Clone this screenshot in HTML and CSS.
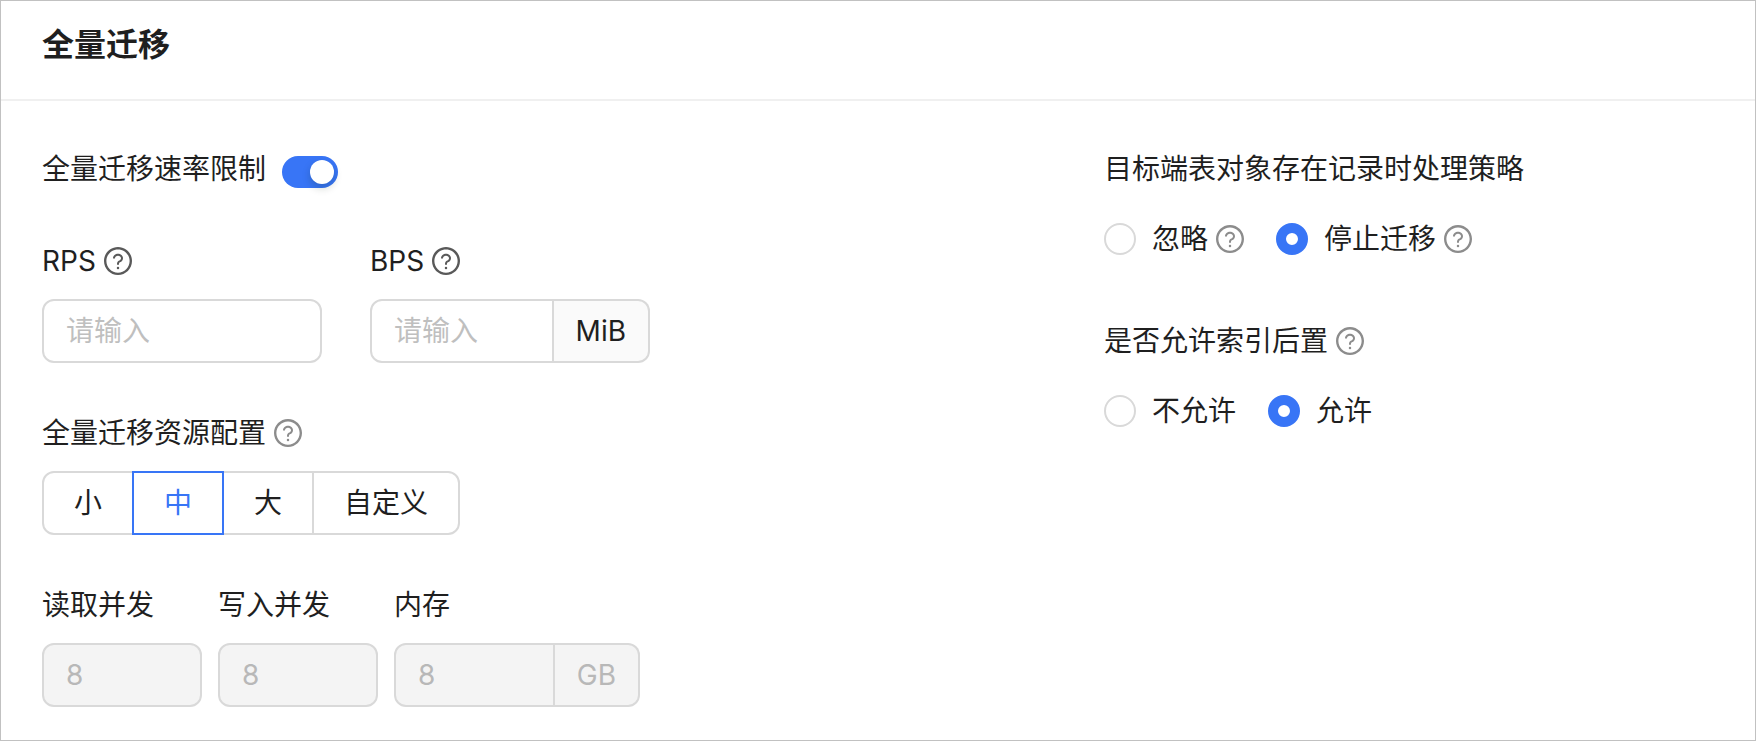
FILE: index.html
```html
<!DOCTYPE html>
<html lang="zh-CN">
<head>
<meta charset="utf-8">
<meta name="viewport" content="width=device-width, initial-scale=1">
<title>全量迁移</title>
<link rel="stylesheet" href="styles.css">
</head>
<body>
<svg class="sprite" aria-hidden="true">
  <symbol id="question" viewBox="64 64 896 896">
    <path d="M512 64C264.6 64 64 264.6 64 512s200.6 448 448 448 448-200.6 448-448S759.4 64 512 64zm0 820c-205.4 0-372-166.6-372-372s166.6-372 372-372 372 166.6 372 372-166.6 372-372 372z"/>
    <path d="M623.6 316.7C593.6 290.4 554 276 512 276s-81.6 14.5-111.6 40.7C369.2 344 352 380.7 352 420v7.6c0 4.4 3.6 8 8 8h48c4.4 0 8-3.6 8-8V420c0-44.1 43.1-80 96-80s96 35.9 96 80c0 31.1-22 59.6-56.1 72.7-21.2 8.1-39.2 22.3-52.1 40.9-13.1 19-19.9 41.8-19.9 64.9V620c0 4.4 3.6 8 8 8h48c4.4 0 8-3.6 8-8v-22.7a48.3 48.3 0 0130.9-44.8c59-22.7 97.1-74.7 97.1-132.5.1-39.3-17.1-76-48.3-103.3zM472 732a40 40 0 1080 0 40 40 0 10-80 0z"/>
  </symbol>
</svg>
<main class="panel">
  <header class="panel-header">
    <h1 class="panel-title">全量迁移</h1>
  </header>
  <form class="panel-body">
    <div class="column">
      <div class="switch-row">
        <label for="limit">全量迁移速率限制</label>
        <input class="switch" id="limit" type="checkbox" role="switch" checked>
      </div>
      <div class="fields rate-fields">
        <div class="field field-wide">
          <div class="label-row">
            <label for="rps">RPS</label>
            <svg class="help help-dark" aria-hidden="true"><use href="#question"/></svg>
          </div>
          <input class="input" id="rps" type="text" placeholder="请输入">
        </div>
        <div class="field field-wide">
          <div class="label-row">
            <label for="bps">BPS</label>
            <svg class="help help-dark" aria-hidden="true"><use href="#question"/></svg>
          </div>
          <div class="input-group">
            <input class="input" id="bps" type="text" placeholder="请输入">
            <span class="addon">MiB</span>
          </div>
        </div>
      </div>
      <div class="field resource-field">
        <div class="label-row">
          <span id="resource">全量迁移资源配置</span>
          <svg class="help" aria-hidden="true"><use href="#question"/></svg>
        </div>
        <div class="segmented" role="group" aria-labelledby="resource">
          <button class="segment" type="button" aria-pressed="false">小</button>
          <button class="segment segment-active" type="button" aria-pressed="true">中</button>
          <button class="segment" type="button" aria-pressed="false">大</button>
          <button class="segment" type="button" aria-pressed="false">自定义</button>
        </div>
      </div>
      <div class="fields">
        <div class="field field-small">
          <label class="label-row" for="read">读取并发</label>
          <input class="input" id="read" type="text" value="8" disabled>
        </div>
        <div class="field field-small">
          <label class="label-row" for="write">写入并发</label>
          <input class="input" id="write" type="text" value="8" disabled>
        </div>
        <div class="field field-memory">
          <label class="label-row" for="memory">内存</label>
          <div class="input-group">
            <input class="input" id="memory" type="text" value="8" disabled>
            <span class="addon addon-disabled">GB</span>
          </div>
        </div>
      </div>
    </div>
    <div class="column">
      <div class="choice" role="radiogroup" aria-labelledby="strategy">
        <div class="label-row"><span id="strategy">目标端表对象存在记录时处理策略</span></div>
        <div class="options">
          <div class="option">
            <input class="radio" id="ignore" type="radio" name="strategy">
            <label class="option-label" for="ignore">忽略<svg class="help" aria-hidden="true"><use href="#question"/></svg></label>
          </div>
          <div class="option">
            <input class="radio" id="stop" type="radio" name="strategy" checked>
            <label class="option-label" for="stop">停止迁移<svg class="help" aria-hidden="true"><use href="#question"/></svg></label>
          </div>
        </div>
      </div>
      <div class="choice" role="radiogroup" aria-labelledby="postpone">
        <div class="label-row">
          <span id="postpone">是否允许索引后置</span>
          <svg class="help" aria-hidden="true"><use href="#question"/></svg>
        </div>
        <div class="options">
          <div class="option">
            <input class="radio" id="deny" type="radio" name="postpone">
            <label class="option-label" for="deny">不允许</label>
          </div>
          <div class="option">
            <input class="radio" id="allow" type="radio" name="postpone" checked>
            <label class="option-label" for="allow">允许</label>
          </div>
        </div>
      </div>
    </div>
  </form>
</main>
</body>
</html>
```
FILE: styles.css
```css
:root {
  --primary: #3875f6;
  --border: #d9d9d9;
  --text: #1f1f1f;
  --muted: #bfbfbf;
}

* {
  box-sizing: border-box;
}

body {
  margin: 0;
  color: var(--text);
  background: #fff;
  font: 28px/44px Inter, "Noto Sans CJK SC", sans-serif;
}

input,
button {
  margin: 0;
  font: inherit;
  color: inherit;
}

.sprite {
  display: none;
}

.panel {
  min-height: 100vh;
  border: 1px solid #c1c1c1;
}

.panel-header {
  padding: 20px 41px 30px;
  border-bottom: 2px solid #f0f0f0;
}

.panel-title {
  margin: 0;
  font-size: 32px;
  font-weight: 600;
  line-height: 48px;
}

.panel-body {
  display: grid;
  grid-template-columns: minmax(0, 1062fr) minmax(0, 610fr);
  padding: 46px 41px 32px;
}

.switch-row {
  display: flex;
  align-items: center;
  gap: 16px;
  height: 50px;
  margin-bottom: 42px;
}

.switch-row label {
  align-self: flex-start;
}

.switch {
  appearance: none;
  display: flex;
  justify-content: flex-end;
  width: 56px;
  height: 32px;
  padding: 4px;
  border-radius: 16px;
  background: var(--primary);
}

.switch::before {
  content: "";
  width: 24px;
  height: 24px;
  border-radius: 50%;
  background: #fff;
  box-shadow: 0 4px 8px rgba(0, 35, 11, 0.2);
}

.fields {
  display: flex;
  gap: 16px;
}

.rate-fields {
  gap: 48px;
}

.rate-fields,
.resource-field {
  margin-bottom: 48px;
}

.field {
  display: flex;
  flex-direction: column;
  gap: 16px;
}

.field-wide {
  width: 280px;
}

.field-small {
  width: 160px;
}

.field-memory {
  width: 246px;
}

.label-row,
.option-label {
  display: flex;
  align-items: center;
  gap: 8px;
  height: 44px;
}

.help {
  flex: none;
  width: 28px;
  height: 28px;
  fill: #8c8c8c;
}

.help-dark {
  fill: #595959;
}

.input {
  width: 100%;
  min-width: 0;
  height: 64px;
  padding: 0 22px;
  border: 2px solid var(--border);
  border-radius: 12px;
  background: #fff;
}

.input::placeholder {
  color: var(--muted);
  opacity: 1;
}

.input:disabled {
  color: #b8b8b8;
  background: #f4f4f4;
}

.input-group {
  display: flex;
}

.input-group .input {
  flex: 1;
  border-radius: 12px 0 0 12px;
}

.addon {
  padding: 8px 22px;
  border: 2px solid var(--border);
  border-left: 0;
  border-radius: 0 12px 12px 0;
  background: #fafafa;
}

.addon-disabled {
  color: #b8b8b8;
  background: #f4f4f4;
}

.segmented {
  display: flex;
}

.segment {
  height: 64px;
  padding: 0 30px;
  border: 2px solid var(--border);
  background: #fff;
}

.segment + .segment {
  margin-left: -2px;
}

.segment:first-child {
  border-radius: 12px 0 0 12px;
}

.segment:last-child {
  border-radius: 0 12px 12px 0;
}

.segment-active {
  z-index: 1;
  color: var(--primary);
  border-color: var(--primary);
}

.choice {
  display: flex;
  flex-direction: column;
  gap: 26px;
  margin-bottom: 58px;
}

.options {
  display: flex;
  gap: 32px;
}

.option {
  display: flex;
  align-items: center;
  gap: 16px;
}

.radio {
  appearance: none;
  flex: none;
  width: 32px;
  height: 32px;
  border: 2px solid var(--border);
  border-radius: 50%;
  background: #fff;
}

.radio:checked {
  border: 10px solid var(--primary);
}
```
